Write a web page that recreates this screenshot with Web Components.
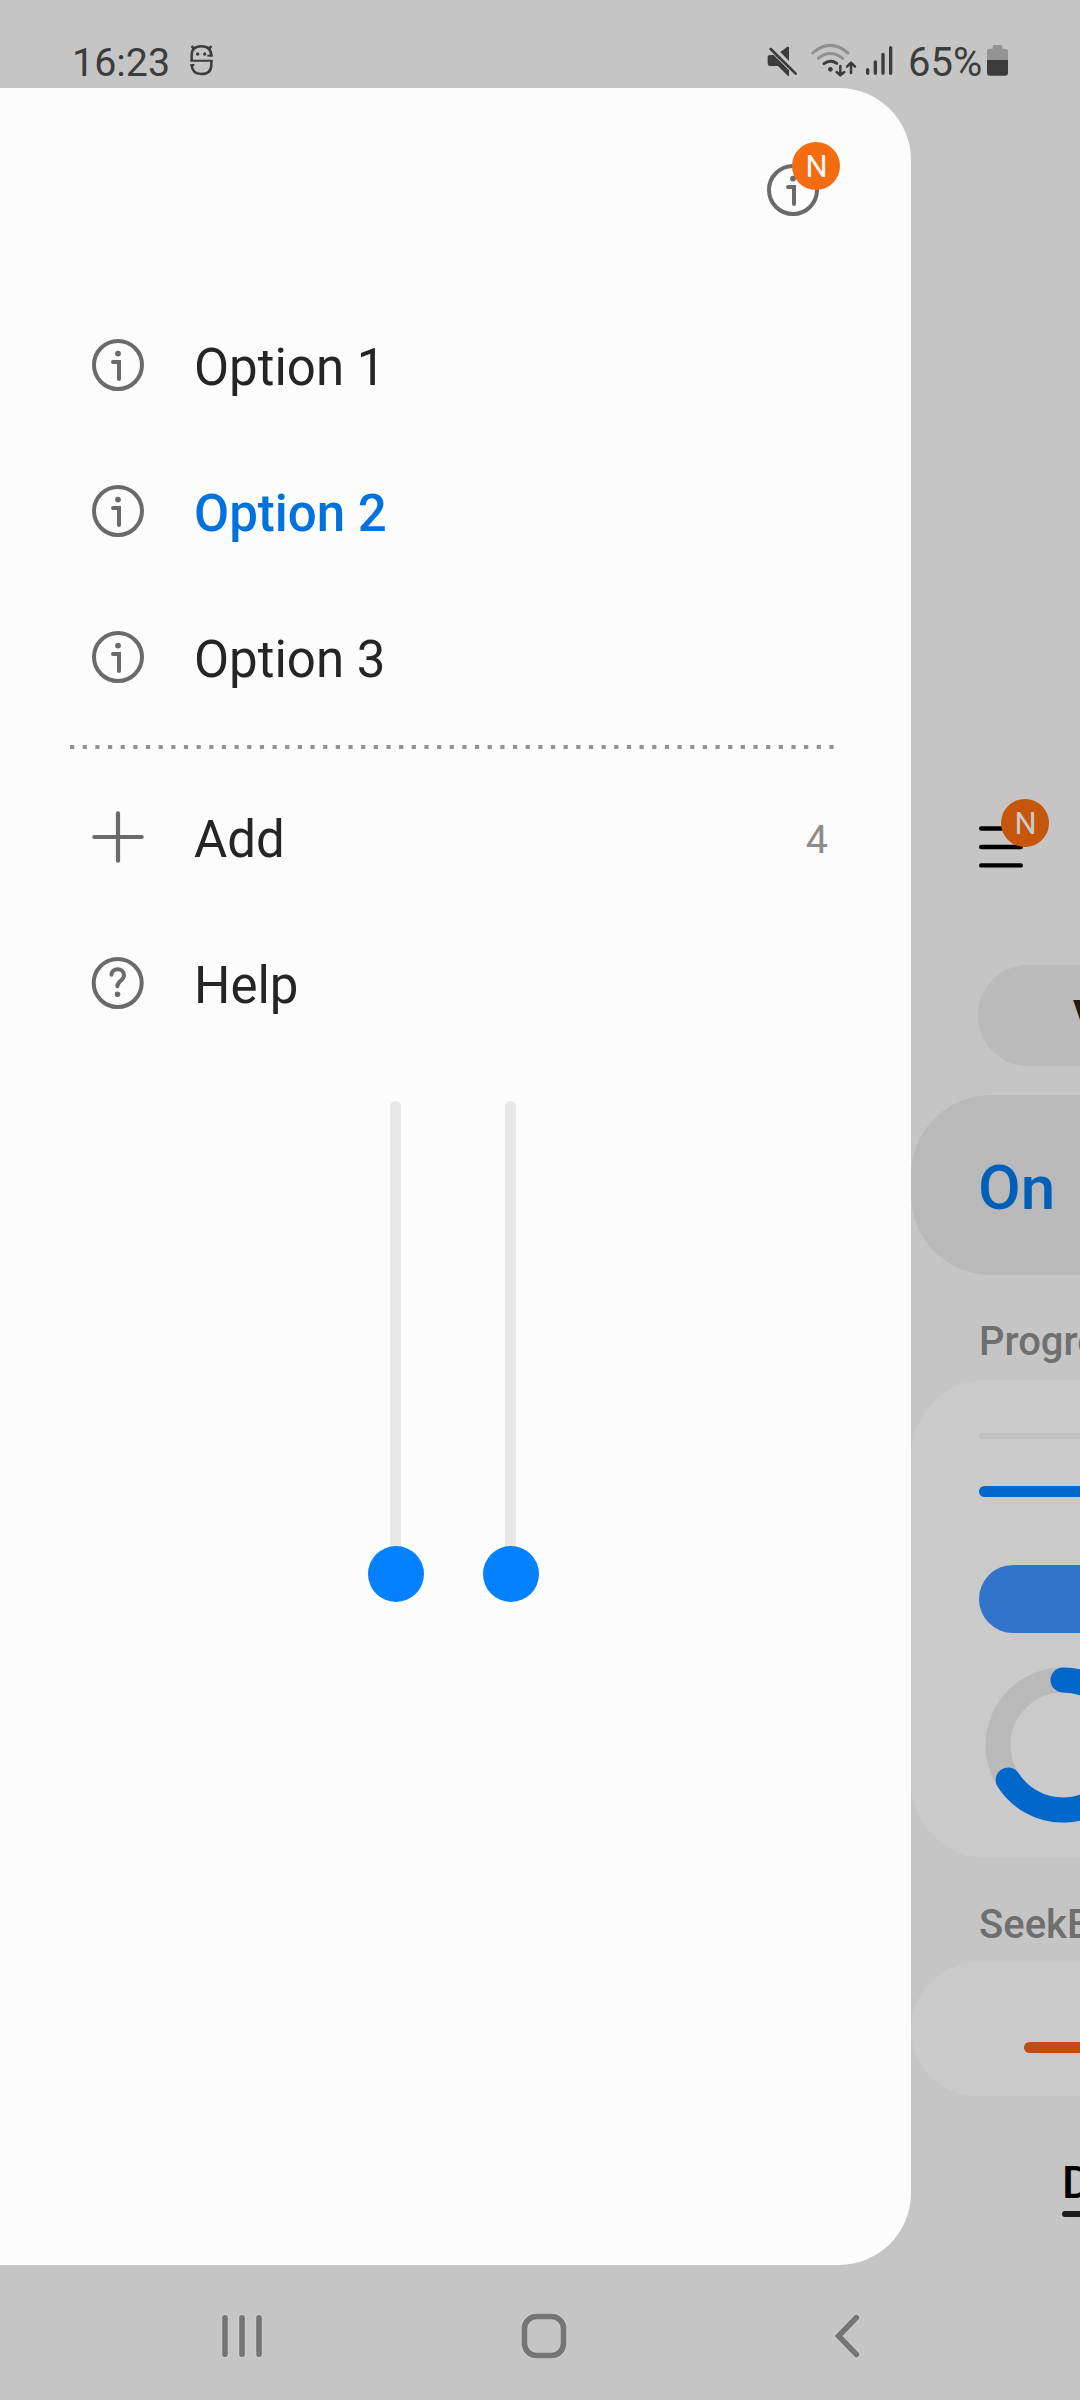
<!DOCTYPE html>
<html lang="en">
<head>
<meta charset="utf-8">
<title>Drawer layout</title>
<style>
  html, body { margin: 0; padding: 0; }
  body { width: 1080px; height: 2400px; overflow: hidden; background: #c5c5c5; font-family: Roboto, "Liberation Sans", sans-serif; }
</style>
</head>
<body>
<phone-screen>
  <status-bar slot="status" time="16:23" battery="65%"></status-bar>
  <nav-drawer slot="drawer">
    <badged-icon slot="header" label="N" icon="info"></badged-icon>
    <drawer-item icon="info">Option 1</drawer-item>
    <drawer-item icon="info" selected>Option 2</drawer-item>
    <drawer-item icon="info">Option 3</drawer-item>
    <dotted-divider></dotted-divider>
    <drawer-item icon="plus" count="4">Add</drawer-item>
    <drawer-item icon="help">Help</drawer-item>
    <vertical-sliders slot="footer"></vertical-sliders>
  </nav-drawer>
  <page-behind slot="page"></page-behind>
  <system-nav slot="nav"></system-nav>
</phone-screen>
<script>
const icons = {
  info: `<svg width="56" height="56" viewBox="-28 -28 56 56" fill="none" stroke="#6a6a6a" stroke-width="4"><circle r="24"/><circle cx="0" cy="-11.4" r="2.9" fill="#6a6a6a" stroke="none"/><path d="M-5-3H1V14" stroke-linecap="round" stroke-linejoin="miter"/></svg>`,
  plus: `<svg width="56" height="56" viewBox="-28 -28 56 56" stroke="#6a6a6a" stroke-width="4.2" stroke-linecap="round"><path d="M-23.7 0H23.7M0-23.7V23.7"/></svg>`,
  help: `<svg width="56" height="56" viewBox="-28 -28 56 56" fill="none" stroke="#6a6a6a" stroke-width="4"><circle cx="-.3" cy="0" r="24"/><path d="M-6.5-8.2C-6.5-11.6-3.8-13.7-.4-13.7C3.2-13.7 6-11.3 6-7.8C6-2.6-.6-1.8-.6 3.2" stroke-linecap="round"/><circle cx="-.5" cy="11.2" r="2.8" fill="#6a6a6a" stroke="none"/></svg>`,
  menu: `<svg width="56" height="56" viewBox="-28 -28 56 56" stroke="#000" stroke-width="4.4" stroke-linecap="round"><path d="M-19.8-18.5H19.8M-19.8 0H19.8M-19.8 18.4H19.8"/></svg>`
};

function define(name, render) {
  customElements.define(name, class extends HTMLElement {
    constructor() { super(); this.attachShadow({ mode: 'open' }); }
    connectedCallback() { this.shadowRoot.innerHTML = render(this); }
  });
}

define('phone-screen', () => `
  <style>
    :host { display: grid; width: 1080px; height: 2400px; grid-template-rows: 88px 2177px 135px; background: #c5c5c5; overflow: hidden; }
    .middle { display: grid; grid-template-columns: 911px 169px; min-height: 0; }
  </style>
  <slot name="status"></slot>
  <div class="middle"><slot name="drawer"></slot><slot name="page"></slot></div>
  <slot name="nav"></slot>`);

define('status-bar', el => `
  <style>
    :host { display: flex; height: 88px; box-sizing: border-box; padding: 30px 69px 0 72px; color: #3c3c3c; font-size: 39.4px; line-height: 65px; }
    svg { display: block; flex: none; }
    .face { margin-left: 18px; }
    .gap { flex: 1; }
    .level { width: 76px; margin-right: 1px; margin-left: -1px; white-space: nowrap; font-size: 40px; }
  </style>
  <span>${el.getAttribute('time')}</span>
  <svg class="face" width="26" height="58" viewBox="384 0 78 174" fill="none" stroke="#3c3c3c" stroke-width="7.5">
    <path d="M395 48L402 57M454 48L447 57" stroke-width="8"/>
    <path d="M454 79C454 57 443 49 424 49C405 49 395 58 395 76V92M454 92V104C454 122 443 132 424 132C407 132 396 123 395 105"/>
    <path d="M391 92H458M391 105H403" stroke-width="6"/><path d="M442 77H458" stroke-width="6"/>
    <circle cx="413" cy="72" r="5" fill="#3c3c3c" stroke="none"/><circle cx="434" cy="72" r="5" fill="#3c3c3c" stroke="none"/>
  </svg>
  <span class="gap"></span>
  <svg width="146" height="58" viewBox="40 0 438 174" fill="none" stroke="#3c3c3c" stroke-linecap="round">
    <path d="M54 82Q54 75 62 75H72L118 121V138H115L85 108H62Q54 108 54 100ZM92 66L113 50H118V93Z" fill="#3c3c3c" stroke="none"/>
    <path d="M63 57L138 131" stroke-width="8"/>
    <path d="M189 69Q241 23 295 69M206 85Q241 56 279 85" stroke="#909090" stroke-width="9"/>
    <path d="M223 101Q242 87 261 100" stroke-width="9"/><circle cx="242" cy="118" r="7" fill="#3c3c3c" stroke="none"/>
    <path d="M272 108V134M261 126L272 136L284 126M304 129V101M292 110L304 98L316 110" stroke-width="7.5" stroke-linejoin="round"/>
    <path d="M354 119V130M377 96V130M400 73V130M423 53V130" stroke-width="10"/>
  </svg>
  <span class="level">${el.getAttribute('battery')}</span>
  <svg width="26" height="58" viewBox="705 0 78 174">
    <path d="M711 91V64Q711 56 719 56H728V50Q728 45 733 45H752Q757 45 757 50V56H766Q774 56 774 64V91Z" fill="#939393"/>
    <path d="M711 90H774V128Q774 137 765 137H720Q711 137 711 128Z" fill="#3c3c3c"/>
  </svg>`);

define('nav-drawer', () => `
  <style>
    :host { display: flex; flex-direction: column; box-sizing: border-box; width: 911px; height: 2177px; border-radius: 0 72px 72px 0; background: #fcfcfc; }
    header { display: flex; justify-content: flex-end; height: 207px; box-sizing: border-box; padding: 74px 90px 0 0; }
  </style>
  <header><slot name="header"></slot></header>
  <slot></slot>
  <slot name="footer"></slot>`);

define('badged-icon', el => `
  <style>
    :host { display: block; position: relative; width: 56px; height: 56px; }
    svg { display: block; }
    .badge { position: absolute; left: var(--badge-left, 27px); top: var(--badge-top, -20px); width: 48px; height: 48px; border-radius: 50%;
      display: flex; align-items: center; justify-content: center; background: var(--badge-color, #f56b10); color: var(--badge-text, #fcfcfc); font-size: 31px; line-height: 49px; text-indent: 1px; }
  </style>
  ${icons[el.getAttribute('icon')]}
  <span class="badge">${el.getAttribute('label')}</span>`);

define('drawer-item', el => {
  const on = el.hasAttribute('selected'), count = el.getAttribute('count');
  return `
  <style>
    :host { display: flex; align-items: center; flex: none; height: 146px; box-sizing: border-box; padding: 0 83px 0 90px; font-size: 51px; line-height: 60px; color: ${on ? '#0072de' : '#252525'}; font-weight: ${on ? 500 : 400}; }
    svg { display: block; margin-bottom: 6px; }
    .label { flex: 1; margin-left: 48px; }
    .count { font-size: 39.4px; color: #8c8c8c; }
  </style>
  ${icons[el.getAttribute('icon')]}
  <span class="label"><slot></slot></span>
  ${count ? `<span class="count">${count}</span>` : ''}`;
});

define('dotted-divider', () => `
  <style>:host { display: block; height: 34px; flex: none; } svg { display: block; }</style>
  <svg width="911" height="34"><path d="M70 14H834" stroke="#929292" stroke-width="4" stroke-dasharray="4.22 8.436"/></svg>`);

define('vertical-sliders', () => `
  <style>
    :host { display: flex; gap: 59px; padding: 42px 0 0 368px; }
    .slider { display: flex; flex-direction: column; align-items: center; width: 56px; }
    .track { width: 11px; height: 449px; border-radius: 6px 6px 0 0; background: #e8e8e8; margin-right: 1px; }
    .thumb { width: 56px; height: 56px; border-radius: 50%; background: #0381fe; margin-top: -4px; }
  </style>
  <div class="slider"><div class="track"></div><div class="thumb"></div></div>
  <div class="slider"><div class="track"></div><div class="thumb"></div></div>`);

define('progress-ring', () => `
  <style>:host { display: block; } svg { display: block; }</style>
  <svg width="156" height="156" viewBox="-78 -78 156 156" fill="none" stroke-width="25">
    <circle r="65" stroke="#b9b9b9"/>
    <path d="M0-65A65 65 0 1 1-54.8 35" stroke="#0067cb" stroke-linecap="round"/>
  </svg>`);

define('page-behind', () => `
  <style>
    :host { display: flex; flex-direction: column; width: 169px; height: 2177px; overflow: hidden; white-space: nowrap; }
    :host > * { flex: none; }
    badged-icon { margin: 731px 0 0 63px; --badge-left: 27px; --badge-top: -20px; --badge-color: #c5560b; --badge-text: #cacaca; }
    badged-icon { margin-left: 62px; --badge-left: 28px; }
    .pill { height: 101px; box-sizing: border-box; margin: 90px 0 0 67px; padding-left: 95px; border-radius: 50px 0 0 50px; background: #bababa; color: #1c1c1c; font-size: 42px; font-weight: 700; line-height: 101px; overflow: hidden; }
    .switch { height: 180px; box-sizing: border-box; margin-top: 29px; padding-left: 67px; border-radius: 80px 0 0 80px; background: #b9b9b9; color: #005fb6; font-size: 62px; font-weight: 500; line-height: 186px; }
    .title { height: 105px; box-sizing: border-box; padding: 43px 0 0 68px; color: #6f6f6f; font-size: 40px; line-height: 48px; font-weight: 500; overflow: hidden; }
    .card { box-sizing: border-box; background: #cacaca; overflow: hidden; }
    .progress { height: 478px; padding: 53px 0 0 68px; border-radius: 76px 0 0 76px; }
    .thin { height: 6px; border-radius: 3px 0 0 3px; background: #c0c0c0; }
    .line { height: 11px; margin-top: 47px; border-radius: 6px 0 0 6px; background: #0067cb; }
    .thick { height: 68px; margin-top: 68px; border-radius: 34px 0 0 34px; background: #3273cb; }
    progress-ring { width: 156px; margin: 34px 0 0 6px; }
    .seek { height: 133px; padding: 79px 0 0 113px; border-radius: 67px 0 0 67px; }
    .seek div { height: 11px; border-radius: 6px 0 0 6px; background: #c14d14; }
    .tab { margin: 59px 0 0 151px; }
    .tab span { display: block; height: 56px; padding-left: 0; color: #000; font-size: 45px; line-height: 56px; font-weight: 500; }
    .tab div { height: 6px; border-radius: 3px 0 0 3px; background: #1c1c1c; }
  </style>
  <badged-icon label="N" icon="menu"></badged-icon>
  <div class="pill">V</div>
  <div class="switch">On</div>
  <div class="title">Progress</div>
  <div class="card progress"><div class="thin"></div><div class="line"></div><div class="thick"></div><progress-ring></progress-ring></div>
  <div class="title">SeekB</div>
  <div class="card seek"><div></div></div>
  <div class="tab"><span>D</span><div></div></div>`);

define('system-nav', () => `
  <style>
    :host { display: flex; align-items: center; justify-content: space-between; height: 135px; box-sizing: border-box; padding: 7px 207.5px 0 216px; }
    svg { display: block; }
  </style>
  <svg width="52" height="56" viewBox="-26 -28 52 56" stroke-linecap="round"><path d="M-17-18.3V18.3M0-18.3V18.3M17-18.3V18.3" stroke="#cdcdcd" stroke-width="7.5"/><path d="M-17-18.3V18.3M0-18.3V18.3M17-18.3V18.3" stroke="#757575" stroke-width="5.6"/></svg>
  <svg width="52" height="56" viewBox="-26 -28 52 56" fill="none"><rect x="-19.5" y="-19.5" width="39" height="39" rx="12" stroke="#cdcdcd" stroke-width="7.5"/><rect x="-19.5" y="-19.5" width="39" height="39" rx="12" stroke="#757575" stroke-width="5.6"/></svg>
  <svg width="52" height="56" viewBox="-24 -28 52 56" fill="none" stroke-linecap="round"><path d="M11.5-18.5L-6.5 0L11.5 18.5" stroke="#cdcdcd" stroke-width="7.2"/><path d="M11.5-18.5L-6.5 0L11.5 18.5" stroke="#757575" stroke-width="5.4"/></svg>`);
</script>
</body>
</html>
